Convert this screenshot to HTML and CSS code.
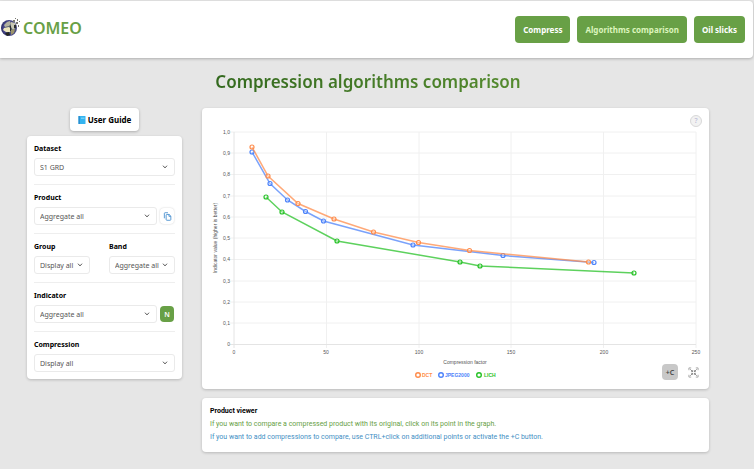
FILE: index.html
```html
<!DOCTYPE html>
<html lang="en">
<head>
  <meta charset="UTF-8" />
  <meta name="viewport" content="width=device-width, initial-scale=1.0" />
  <title>COMEO</title>
  <link rel="stylesheet" href="styles.css">
</head>
<body>
  <header class="header">
    <a class="brand" href="#">
      <svg class="logo" viewBox="0 0 20 20" aria-hidden="true">
        <defs>
          <radialGradient id="globe" cx="0.6" cy="0.5" r="0.6">
            <stop offset="0.3" stop-color="#55606f" />
            <stop offset="0.75" stop-color="#44448a" />
            <stop offset="1" stop-color="#2c2c62" />
          </radialGradient>
        </defs>
        <circle cx="9" cy="10" r="8" fill="url(#globe)" />
        <path d="M4 7l3-3 3-1 1 3-2 2-4 1z" fill="#b3b2a0" />
        <path d="M4 10l5-1 2 2-1 3-4 0-3-2z" fill="#ede6bd" />
        <path d="M11 4l4 1 1 4-3 3-2-3z" fill="#c7c6b2" />
        <path d="M11 12l4-1-1 4-3 2z" fill="#9b936a" />
        <path d="M5 15l4-1 1 3-3 1z" fill="#24251f" />
        <path d="M10 8h1v5h-1zM14 7h2v3h-2z" fill="#2b2d30" />
        <path d="M13 2h2v2h-2zM16 4h2v2h-2zM17 1h1v2h-1zM18 7h1v2h-1zM15 0h1v1h-1zM19 3h1v1h-1z" fill="#77776f" />
      </svg>
      <span>COMEO</span>
    </a>
    <nav class="nav">
      <a class="nav-link" href="#">Compress</a>
      <a class="nav-link active" href="#">Algorithms comparison</a>
      <a class="nav-link" href="#">Oil slicks</a>
    </nav>
  </header>

  <main class="page">
    <h1 class="title"><span>Compression algorithms comparison</span></h1>
    <div class="layout">
      <aside class="sidebar">
        <button class="guide" type="button">
          <svg viewBox="0 0 8 10" aria-hidden="true">
            <rect x="0.500" y="1" width="7" height="8" rx="0.500" fill="#35b4f0" />
            <rect x="0.500" y="1" width="1.500" height="8" fill="#2b8fd0" />
            <rect x="3" y="2.500" width="3.500" height="1.500" fill="#6fd0f8" />
          </svg>
          User Guide
        </button>
        <form class="card filters">
          <div class="field">
            <label for="dataset">Dataset</label>
            <select id="dataset"><option>S1 GRD</option></select>
          </div>
          <div class="field">
            <label for="product">Product</label>
            <div class="row">
              <select id="product"><option>Aggregate all</option></select>
              <button class="icon-btn copy" type="button" aria-label="Copy">
                <svg viewBox="0 0 10 10" fill="none" stroke="#4a90cf" aria-hidden="true">
                  <path d="M3.500 3.500q0-.8.8-.8H6.800L8.700 4.600V8.400q0 .8-.8.800H4.300q-.8 0-.8-.8z" />
                  <path d="M6.600 2.700V4.800H8.700M1.500 7V1.600q0-.8.8-.8H5.500" />
                </svg>
              </button>
            </div>
          </div>
          <div class="field split">
            <div>
              <label for="group">Group</label>
              <select id="group"><option>Display all</option></select>
            </div>
            <div>
              <label for="band">Band</label>
              <select id="band"><option>Aggregate all</option></select>
            </div>
          </div>
          <div class="field">
            <label for="indicator">Indicator</label>
            <div class="row">
              <select id="indicator"><option>Aggregate all</option></select>
              <button class="icon-btn norm" type="button">N</button>
            </div>
          </div>
          <div class="field">
            <label for="compression">Compression</label>
            <select id="compression"><option>Display all</option></select>
          </div>
        </form>
      </aside>

      <section class="content">
        <div class="card chart-card">
          <svg class="chart" viewBox="0 0 507 281" role="img" aria-label="Indicator value by compression factor">
            <g class="grid">
              <path d="M28 24H494M28 45H494M28 66.500H494M28 88H494M28 109H494M28 130H494M28 151.500H494M28 173H494M28 194H494M28 215H494" />
              <path d="M124.500 24V240M217 24V240M309 24V240M401.500 24V240M494 24V240" />
              <path class="axis" d="M32 24V240M28 236.500H494" />
            </g>
            <g class="ticks ticks-y">
              <text x="28" y="26">1,0</text>
              <text x="28" y="47">0,9</text>
              <text x="28" y="68">0,8</text>
              <text x="28" y="90">0,7</text>
              <text x="28" y="111">0,6</text>
              <text x="28" y="132">0,5</text>
              <text x="28" y="153">0,4</text>
              <text x="28" y="175">0,3</text>
              <text x="28" y="196">0,2</text>
              <text x="28" y="217">0,1</text>
              <text x="28" y="238">0</text>
            </g>
            <g class="ticks ticks-x">
              <text x="32" y="246">0</text>
              <text x="124" y="246">50</text>
              <text x="217" y="246">100</text>
              <text x="309" y="246">150</text>
              <text x="402" y="246">200</text>
              <text x="494" y="246">250</text>
              <text x="263" y="256">Compression factor</text>
              <text transform="translate(15 130) rotate(-90)">Indicator value (higher is better)</text>
            </g>
            <g class="series lich">
              <polyline points="64,89 80,104 135,133 258,154 278,158 432,165" />
              <circle cx="64" cy="89" r="2" /><circle cx="80" cy="104" r="2" />
              <circle cx="135" cy="133" r="2" /><circle cx="258" cy="154" r="2" />
              <circle cx="278" cy="158" r="2" /><circle cx="432" cy="165" r="2" />
            </g>
            <g class="series jpeg">
              <polyline points="50,44 68,75.500 85.500,92 103.500,103.500 121.500,113 211,137 301,147.500 392,154.500" />
              <circle cx="50" cy="44" r="2" /><circle cx="68" cy="75.500" r="2" />
              <circle cx="85.500" cy="92" r="2" /><circle cx="103.500" cy="103.500" r="2" />
              <circle cx="121.500" cy="113" r="2" /><circle cx="211" cy="137" r="2" />
              <circle cx="301" cy="147.500" r="2" /><circle cx="392" cy="154.500" r="2" />
            </g>
            <g class="series dct">
              <polyline points="50,39 66,68 96,95.500 132,111 171.500,124 216.500,134.500 267.500,142.500 386.500,154" />
              <circle cx="50" cy="39" r="2" /><circle cx="66" cy="68" r="2" />
              <circle cx="96" cy="95.500" r="2" /><circle cx="132" cy="111" r="2" />
              <circle cx="171.500" cy="124" r="2" /><circle cx="216.500" cy="134.500" r="2" />
              <circle cx="267.500" cy="142.500" r="2" /><circle cx="386.500" cy="154" r="2" />
            </g>
            <g class="legend">
              <g class="dct"><circle cx="216" cy="267" r="2.300" /><text x="220" y="269">DCT</text></g>
              <g class="jpeg"><circle cx="239" cy="267" r="2.300" /><text x="243" y="269">JPEG2000</text></g>
              <g class="lich"><circle cx="277" cy="267" r="2.300" /><text x="282" y="269">LICH</text></g>
            </g>
          </svg>
          <button class="help" type="button">?</button>
          <div class="tools">
            <button class="add" type="button">+C</button>
            <button class="shrink" type="button" aria-label="Reset zoom">
              <svg viewBox="0 0 12 12" fill="none" stroke="#777" stroke-width="0.9" aria-hidden="true">
                <path d="M1 3.500V1H3.500M8.500 1H11V3.500M11 8.500V11H8.500M3.500 11H1V8.500" stroke="#999" />
                <path d="M2.500 2.500L5 5M9.500 2.500L7 5M9.500 9.500L7 7M2.500 9.500L5 7" />
                <path d="M5 3.500V5H3.500M7 3.500V5H8.500M7 8.500V7H8.500M5 8.500V7H3.500" />
              </svg>
            </button>
          </div>
        </div>
        <div class="card viewer">
          <h2>Product viewer</h2>
          <p class="hint">If you want to compare a compressed product with its original, click on its point in the graph.</p>
          <p class="hint-add">If you want to add compressions to compare, use CTRL+click on additional points or activate the +C button.</p>
        </div>
      </section>
    </div>
  </main>
</body>
</html>
```

FILE: styles.css
```css
* {
  box-sizing: border-box;
}
body {
  margin: 0;
  padding-top: 1px;
  background-color: #e6e6e6;
  font-family: "Noto Sans", "Open Sans", sans-serif;
  font-size: 7px;
  color: #000;
}
button {
  font-family: inherit;
  padding: 0;
  border: none;
  cursor: pointer;
}
.header {
  display: flex;
  align-items: center;
  justify-content: space-between;
  height: 57px;
  padding: 0 8px 0 0;
  margin-right: 1px;
  background: #fff;
  border-radius: 0 4px 4px 0;
  box-shadow: 0 1px 3px rgba(0,0,0,0.25);
}
.brand {
  display: flex;
  align-items: center;
  gap: 3px;
  padding-bottom: 3px;
  color: #68a046;
  font-size: 16px;
  font-weight: 600;
  line-height: 20px;
  text-decoration: none;
}
.logo {
  width: 20px;
  height: 20px;
}
.nav {
  display: flex;
  gap: 7px;
}
.nav-link {
  padding: 0 8px;
  line-height: 27px;
  border-radius: 4px;
  background-color: #68a046;
  color: #fff;
  font-size: 8px;
  font-weight: 700;
  text-decoration: none;
}
.nav-link.active {
  color: #dcf5bd;
}
.page {
  padding: 12px 45px 16px 27px;
}
.title {
  margin: 0 0 14px;
  font-size: 17px;
  line-height: 24px;
  font-weight: 600;
  text-align: center;
}
.title span {
  background: linear-gradient(90deg, #33691e, #558b2f);
  -webkit-background-clip: text;
  background-clip: text;
  color: transparent;
}
.layout {
  display: grid;
  grid-template-columns: 155fr 507fr;
  gap: 20px;
  align-items: start;
}
.card {
  background: #fff;
  border-radius: 4px;
  box-shadow: 0 1px 3px rgba(0,0,0,0.2);
}
.sidebar {
  display: flex;
  flex-direction: column;
  align-items: center;
  gap: 5px;
}
.guide {
  display: flex;
  align-items: center;
  gap: 2px;
  height: 23px;
  padding: 0 8px;
  background: #fff;
  border-radius: 4px;
  box-shadow: 0 1px 3px rgba(0,0,0,0.25);
  font-size: 8px;
  font-weight: 700;
}
.guide svg {
  width: 8px;
  height: 10px;
}
.filters {
  width: 100%;
  padding: 8px 7px 7px;
}
.field + .field {
  margin-top: 8px;
  padding-top: 8px;
  border-top: 1px solid #eee;
}
.field label {
  display: block;
  margin-bottom: 4px;
  line-height: 10px;
  font-weight: 700;
}
.field select {
  display: block;
  width: 100%;
  height: 18px;
  padding: 0 15px 0 5px;
  border: 1px solid #eaeaea;
  border-radius: 3px;
  appearance: none;
  background: #fff url("data:image/svg+xml,%3Csvg xmlns='http://www.w3.org/2000/svg' viewBox='0 0 6 4' fill='none' stroke='%23555'%3E%3Cpath d='M1 .7L3 2.900L5 .7'/%3E%3C/svg%3E") no-repeat right 6px center / 6px 4px;
  color: #555;
  font-family: inherit;
  font-size: 7px;
}
.row {
  display: flex;
  align-items: center;
  gap: 3px;
}
.row select {
  flex: 1;
}
.split {
  display: flex;
  justify-content: space-between;
}
.icon-btn {
  flex: none;
  width: 14px;
  height: 16px;
  margin-right: 1px;
  border-radius: 4px;
}
.copy {
  display: flex;
  align-items: center;
  justify-content: center;
  background: #fff;
  box-shadow: 0 0 2px rgba(0,0,0,0.2);
}
.copy svg {
  width: 9px;
  height: 9px;
}
.norm {
  background-color: #68a046;
  color: #fff;
  font-size: 7px;
  font-weight: 600;
}
.content {
  display: flex;
  flex-direction: column;
  gap: 9px;
}
.chart-card {
  position: relative;
}
.chart {
  display: block;
  width: 100%;
  font-family: "Liberation Sans", Arial, sans-serif;
}
.grid path {
  fill: none;
  stroke: #f0f0f0;
}
.grid .axis {
  stroke: #e4e4e4;
}
.ticks text {
  font-size: 5px;
  fill: #555;
}
.ticks-y text {
  text-anchor: end;
}
.ticks-x text {
  text-anchor: middle;
}
.dct {
  --line: #ff8c4b;
}
.jpeg {
  --line: #4d83fa;
}
.lich {
  --line: #27c227;
}
.series polyline {
  fill: none;
  stroke: var(--line);
  stroke-opacity: 0.75;
  stroke-width: 1.5;
}
.series circle {
  fill: rgba(255,255,255,0.3);
  stroke: var(--line);
  stroke-width: 1.2;
}
.legend circle {
  fill: none;
  stroke: var(--line);
  stroke-width: 1.4;
}
.legend text {
  font-size: 5px;
  font-weight: 700;
  fill: var(--line);
}
.help {
  position: absolute;
  top: 7px;
  right: 7px;
  width: 12px;
  height: 12px;
  border: 1px solid #d8d8d8;
  border-radius: 50%;
  background: #f2f2f2;
  color: #b4b4d2;
  font-size: 7px;
  line-height: 10px;
}
.tools {
  position: absolute;
  right: 10px;
  bottom: 9px;
  display: flex;
  align-items: center;
  gap: 10px;
}
.add {
  width: 16px;
  height: 16px;
  border-radius: 4px;
  background: #c8c8c8;
  color: #444;
  font-size: 7px;
  font-weight: 600;
}
.shrink {
  width: 11px;
  height: 11px;
  background: none;
}
.shrink svg {
  display: block;
}
.viewer {
  padding: 7px 8px 8px;
  font-family: Roboto, sans-serif;
  line-height: 13px;
}
.viewer h2,
.viewer p {
  margin: 0;
  font-size: 7px;
}
.hint {
  color: #68a046;
}
.hint-add {
  color: #3f8fc4;
}
```
